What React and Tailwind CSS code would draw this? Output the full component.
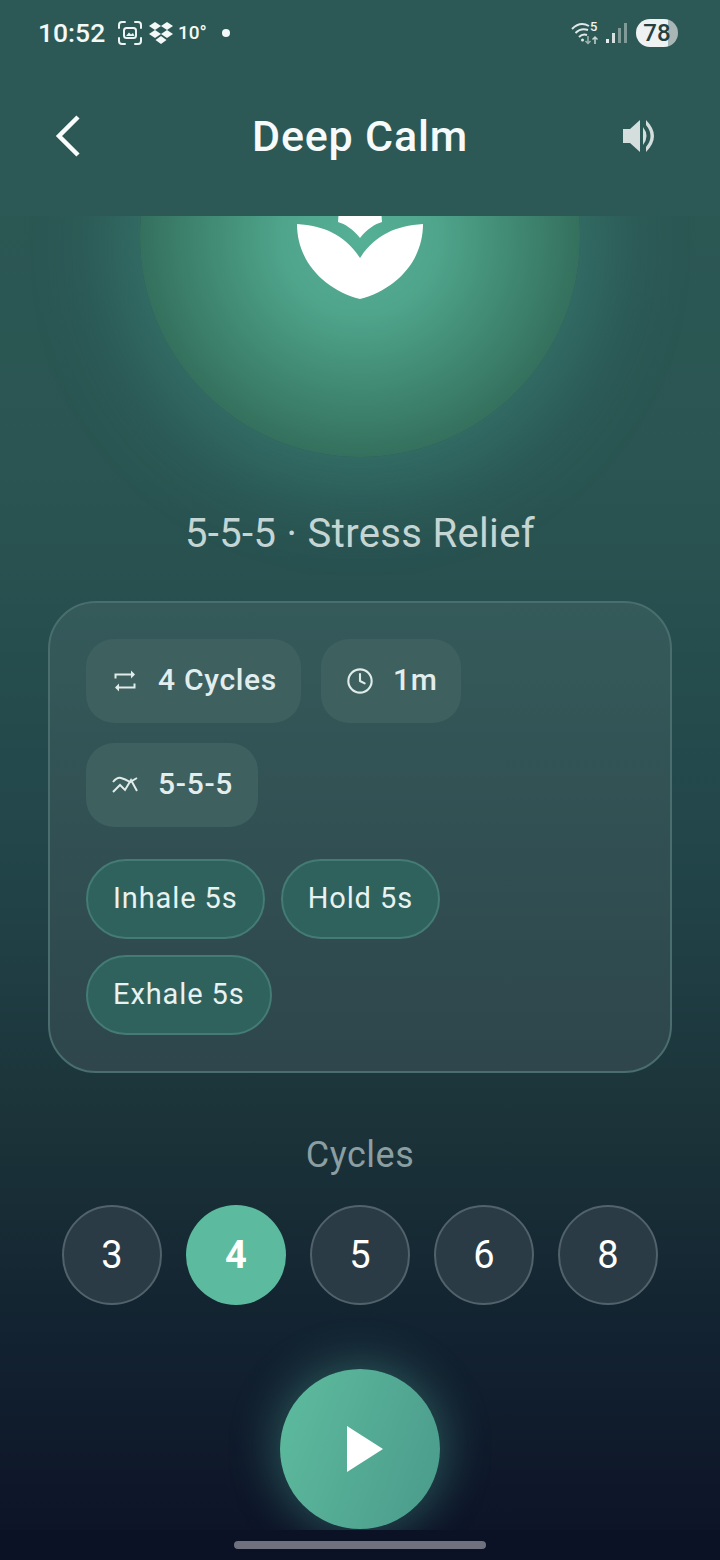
import { Clock } from "lucide-react";

const phases = [["Inhale 5s", "Hold 5s"], ["Exhale 5s"]];
const cycles = [3, 4, 5, 6, 8];

function RepeatIcon() {
  return (
    <svg width="24" height="24" viewBox="0 0 24 24" fill="none" stroke="#dfecea" strokeWidth="2">
      <path d="M2.5 9.5V5.5H21" />
      <path d="M18 1.5L22 5.5L18 9.5" fill="#dfecea" stroke="none" />
      <path d="M21.5 14.5V18.5H3" />
      <path d="M6 14.5L2 18.5L6 22.500Z" fill="#dfecea" stroke="none" />
    </svg>
  );
}

function WaveIcon() {
  return (
    <svg width="26" height="18" viewBox="0 0 26 18" fill="none" stroke="#dfecea" strokeWidth="2">
      <path d="M1 6Q5 1 9 2T18 6L25 2" />
      <path d="M1 16L8 9L13 14L19 4L25 15" />
    </svg>
  );
}

function Chip({ icon, label, className }) {
  return (
    <div className={`h-[84px] rounded-[28px] bg-[#3e605f] flex items-center text-[30px] font-medium tracking-[0.7px] text-[#e2eeed] ${className}`}>
      <span className="flex w-[28px] justify-center">{icon}</span>
      <span className="pb-[3px]">{label}</span>
    </div>
  );
}

function StatusBar() {
  return (
    <div className="h-[66px] pt-[19px] pl-[38px] pr-[42px] flex items-start justify-between text-white">
      <div className="flex items-center h-[28px]">
        <span className="text-[26.500px] font-medium text-[#f4f8f7] w-[80px]">10:52</span>
        <svg width="24" height="24" viewBox="0 0 24 24" fill="none" stroke="#eef4f3" strokeWidth="2" strokeLinecap="round">
          <path d="M1 7V4Q1 1 4 1H7M17 1H20Q23 1 23 4V7M23 17V20Q23 23 20 23H17M7 23H4Q1 23 1 20V17" />
          <rect x="6" y="7" width="12" height="10" rx="2.500" />
          <path d="M8 15L11 11.500L13 13.500L15 12L16.500 15Z" fill="#eef4f3" stroke="none" />
        </svg>
        <svg className="ml-[6px]" width="26" height="24" viewBox="0 0 26 24" fill="#f4f8f7">
          <path d="M7 1L13 5L7 9L1 5Z M19 1L25 5L19 9L13 5Z M7 9L13 13L7 17L1 13Z M19 9L25 13L19 17L13 13Z M13 15L18.500 19L13 23L7.500 19Z" />
        </svg>
        <span className="ml-[4px] text-[19px] font-medium text-[#f4f8f7] w-[30px]">10°</span>
        <span className="ml-[14px] w-[8px] h-[8px] rounded-full bg-[#f4f8f7]" />
      </div>
      <div className="flex items-center h-[28px]">
        <svg width="28" height="26" viewBox="0 0 28 26" fill="none" stroke="#dfe8e7" strokeWidth="2">
          <path d="M1 9Q9 1 18 6" />
          <path d="M4.500 13Q10 7.500 17 10" />
          <path d="M8 17Q11.500 13.500 16 15" />
          <circle cx="11.500" cy="20" r="1.500" fill="#dfe8e7" stroke="none" />
          <path d="M17 16V23M14.500 21L17 23.500L19.500 21" stroke="#9db3b0" strokeWidth="1.500" />
          <path d="M24 24V17M21.500 19.500L24 17L26.500 19.500" stroke="#c5d3d1" strokeWidth="1.500" />
          <text x="19" y="11" fill="#eef4f3" stroke="none" fontSize="13" fontWeight="500" fontFamily="Roboto, sans-serif">5</text>
        </svg>
        <div className="ml-[7px] flex items-end gap-[3px] h-[20px]">
          <span className="w-[3px] h-[4px] bg-[#e6eeed]" />
          <span className="w-[3px] h-[10px] bg-[#d5e0de]" />
          <span className="w-[3px] h-[15px] bg-[#7f9a97]" />
          <span className="w-[3px] h-[20px] bg-[#7f9a97]" />
        </div>
        <div className="ml-[9px] w-[42px] h-[28px] rounded-full bg-[linear-gradient(90deg,#eef2f2_77%,#a9b6b5_77%)] flex items-center justify-center text-[24px] font-medium text-[#24413f]">
          78
        </div>
      </div>
    </div>
  );
}

export default function App() {
  return (
    <div
      className="relative w-[720px] h-[1560px] overflow-hidden flex flex-col bg-[linear-gradient(180deg,#2c5955_0%,#2a5552_30%,#22454a_55%,#1b3339_72%,#132331_85%,#0c1226_100%)]"
      style={{ fontFamily: "Roboto, 'Liberation Sans', sans-serif" }}
    >
      <header className="relative z-10 h-[216px] shrink-0 bg-[#2c5955]">
        <StatusBar />
        <div className="h-[140px] px-[36px] flex items-center justify-between">
          <div className="w-[62px]">
            <svg className="ml-[10px]" width="42" height="44" viewBox="0 0 42 44" fill="none" stroke="#fafcfc" strokeWidth="4.500">
              <path d="M32 3L13 22L32 41" />
            </svg>
          </div>
          <h1 className="text-[43px] font-medium tracking-[0.8px] text-[#f7fafa]">Deep Calm</h1>
          <div className="w-[62px]">
            <svg width="36" height="36" viewBox="0 0 36 36" fill="#d3dedd">
              <path d="M1 11H8L18 2V34L8 25H1Z" />
              <path d="M21 9Q28 18 21 27Z" />
              <path d="M24 2Q40 18 24 34L24 29Q33 18 24 7Z" />
            </svg>
          </div>
        </div>
      </header>

      <div className="h-[241px] shrink-0">
        <div className="mt-[-199px] mx-auto w-[440px] h-[440px] rounded-full bg-[radial-gradient(circle_closest-side,#55b096_0%,#4fa58b_35%,#34705d_100%)] shadow-[0_8px_90px_20px_rgba(80,185,165,0.3)] flex items-center justify-center">
          <svg width="140" height="140" viewBox="290 167 140 140" fill="#ffffff">
            <path d="M360 178C348 190 338 206 338 222C345 224 353 229 360 238C367 229 375 224 382 222C382 206 372 190 360 178Z" />
            <path d="M297 224C297 262 325 290 360 299C395 290 423 262 423 224C395 226 375 235 360 258C345 235 325 226 297 224Z" />
          </svg>
        </div>
      </div>

      <p className="mt-[53px] h-[48px] leading-[48px] text-center text-[40px] tracking-[0.35px] text-[#c5d5d3]">
        5-5-5 · Stress Relief
      </p>

      <section className="mt-[43px] ml-[48px] w-[624px] h-[472px] rounded-[48px] border-2 border-[#4a6e6d] bg-[linear-gradient(180deg,#355a5a_0%,#2e464c_100%)] p-[36px]">
        <div className="flex gap-[20px]">
          <Chip className="w-[215px] pl-[25px] gap-[19px]" icon={<RepeatIcon />} label="4 Cycles" />
          <Chip className="w-[140px] pl-[25px] gap-[19px]" icon={<Clock size={28} strokeWidth={1.8} color="#dfecea" />} label="1m" />
        </div>
        <Chip className="mt-[20px] w-[172px] pl-[25px] gap-[19px]" icon={<WaveIcon />} label="5-5-5" />
        <div className="mt-[32px] flex flex-col gap-[16px]">
          {phases.map((row) => (
            <div key={row[0]} className="flex gap-[16px]">
              {row.map((phase) => (
                <div key={phase} className="h-[80px] px-[25px] rounded-[40px] border-2 border-[#447b74] bg-[#2f625d] flex items-center text-[29px] font-[450] tracking-[0.9px] text-[#e8f2f1]">
                  {phase}
                </div>
              ))}
            </div>
          ))}
        </div>
      </section>

      <p className="mt-[62px] h-[40px] leading-[40px] text-center text-[36px] tracking-[0.5px] text-[#8b9ea1]">Cycles</p>

      <div className="mt-[30px] flex justify-center gap-[24px]">
        {cycles.map((n) =>
          n === 4 ? (
            <div key={n} className="w-[100px] h-[100px] rounded-full bg-[#5cbb9e] flex items-center justify-center text-[38px] font-bold text-white">
              {n}
            </div>
          ) : (
            <div key={n} className="w-[100px] h-[100px] rounded-full border-2 border-[#52626b] bg-[#2b3b46] flex items-center justify-center text-[38px] text-white">
              {n}
            </div>
          )
        )}
      </div>

      <div className="mt-[64px] mx-auto w-[160px] h-[160px] shrink-0 rounded-full bg-[linear-gradient(110deg,#5ebc9e_0%,#4a9a8b_100%)] shadow-[0_0_44px_6px_rgba(85,190,165,0.35)] flex items-center justify-center">
        <svg className="ml-[9px]" width="38" height="46" viewBox="0 0 38 46" fill="#ffffff">
          <path d="M1 0L37 23L1 46Z" />
        </svg>
      </div>

      <div className="absolute bottom-0 inset-x-0 z-10 h-[30px] bg-[#0c1226] flex justify-center">
        <div className="mt-[11px] w-[252px] h-[8px] rounded-full bg-[#70717f]" />
      </div>
    </div>
  );
}
